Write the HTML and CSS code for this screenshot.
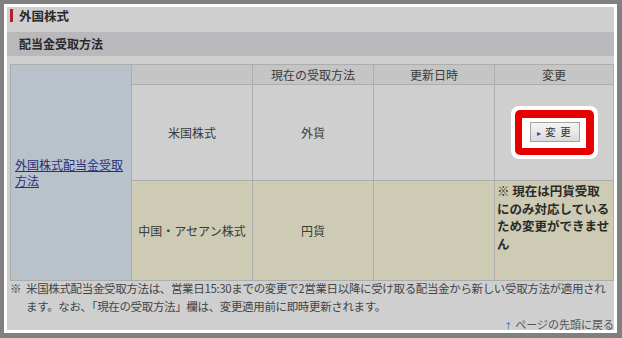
FILE: index.html
```html
<!DOCTYPE html>
<html lang="ja">
<head>
<meta charset="utf-8">
<link rel="stylesheet" href="styles.css">
</head>
<body>
<div class="frame">
  <div class="heading"><span class="title">外国株式</span></div>
  <div class="section">配当金受取方法</div>
  <table class="tbl">
    <colgroup>
      <col class="c1"><col class="c2"><col class="c3"><col class="c4"><col class="c5">
    </colgroup>
    <tr class="head">
      <td class="label" rowspan="3"><a href="#" class="link">外国株式配当金受取方法</a></td>
      <th></th>
      <th>現在の受取方法</th>
      <th>更新日時</th>
      <th>変更</th>
    </tr>
    <tr class="row1">
      <td>米国株式</td>
      <td>外貨</td>
      <td></td>
      <td>
        <span class="hl-outer"><span class="hl-red"><span class="hl-inner"><button class="btn" type="button"><span class="arr">▸</span>変 更</button></span></span></span>
      </td>
    </tr>
    <tr class="row2">
      <td>中国・アセアン株式</td>
      <td>円貨</td>
      <td></td>
      <td class="note">※ 現在は円貨受取にのみ対応しているため変更ができません</td>
    </tr>
  </table>
  <div class="foot">
    <span class="mark">※</span>
    <span class="foottext">米国株式配当金受取方法は、営業日15:30までの変更で2営業日以降に受け取る配当金から新しい受取方法が適用されます。なお、「現在の受取方法」欄は、変更適用前に即時更新されます。</span>
  </div>
  <div class="pagetop"><a href="#" class="toplink"><span class="uparr">↑</span>ページの先頭に戻る</a></div>
</div>
</body>
</html>
```
FILE: styles.css
```css
html, body {
  margin: 0;
  padding: 0;
}
body {
  background: #808080;
  font-family: "Noto Sans CJK JP", "Noto Sans", sans-serif;
  color: #3a3a3a;
  font-size: 12px;
}
.frame {
  margin: 4px 5px 5px 4px;
  width: 607px;
  height: 323px;
  border: 3px solid #ffffff;
  background: #cfcfcf;
  overflow: hidden;
}
.heading {
  height: 25px;
  padding-left: 3px;
}
.title {
  display: inline-block;
  border-left: 3px solid #b4231f;
  padding-left: 6px;
  line-height: 13px;
  font-size: 12.5px;
  font-weight: bold;
  color: #2a2a2a;
}
.section {
  height: 24px;
  line-height: 24px;
  background: #b9b9bc;
  padding-left: 12px;
  font-weight: bold;
  font-size: 12px;
  color: #2a2a2a;
}
.tbl {
  margin: 8px 0 0 3px;
  width: 604px;
  table-layout: fixed;
  border-collapse: collapse;
}
.c1, .c2, .c3, .c4 { width: 121px; }
.tbl td, .tbl th {
  border: 1px solid #adadad;
  padding: 0;
  text-align: center;
  font-weight: normal;
  font-size: 12px;
  color: #3a3a3a;
}
.head th {
  height: 19px;
  background: #c5c5c5;
  line-height: 19px;
}
.tbl td.label {
  background: #b9c2ca;
  text-align: left;
  padding: 0 4px;
  vertical-align: middle;
  line-height: 16px;
}
.link {
  color: #27307a;
  text-decoration: underline;
}
.row1 td {
  height: 95px;
  background: #cfcfcf;
}
.row2 td {
  height: 98px;
  background: #cecbb4;
}
.tbl td.note {
  text-align: left;
  vertical-align: top;
  padding: 1px 3px 0 2px;
  font-weight: bold;
  font-size: 12.5px;
  line-height: 17.5px;
  letter-spacing: 0;
  color: #2a2a2a;
}
.hl-outer {
  display: inline-block;
  background: #ffffff;
  padding: 4px;
  border-radius: 8px;
  vertical-align: middle;
}
.hl-red {
  display: block;
  background: #e60000;
  padding: 8px 8px 7px 7px;
  border-radius: 5px;
}
.hl-inner {
  display: block;
  background: #ffffff;
  padding: 4px 6px 6px 8px;
}
.btn {
  display: block;
  width: 50px;
  height: 20px;
  padding: 0;
  border: 1px solid #a3a3a3;
  background: linear-gradient(#f5f5f5, #dadada);
  font-family: "Noto Sans CJK JP", sans-serif;
  font-size: 10.5px;
  color: #333;
  line-height: 18px;
  letter-spacing: 1px;
}
.arr {
  color: #2a4aa0;
  font-size: 8px;
  margin-right: 3px;
}
.foot {
  display: flex;
  margin-top: -2px;
  padding-left: 3px;
  font-size: 11.5px;
  letter-spacing: -0.35px;
  line-height: 18px;
  color: #444;
}
.mark {
  flex: none;
  width: 16px;
}
.foottext {
  width: 580px;
}
.pagetop {
  text-align: right;
  margin-top: 1px;
  line-height: 16px;
  font-size: 11px;
}
.toplink {
  color: #555;
  text-decoration: none;
}
.uparr {
  color: #2f5cc0;
  font-size: 8px;
  margin-right: 3px;
}
```
